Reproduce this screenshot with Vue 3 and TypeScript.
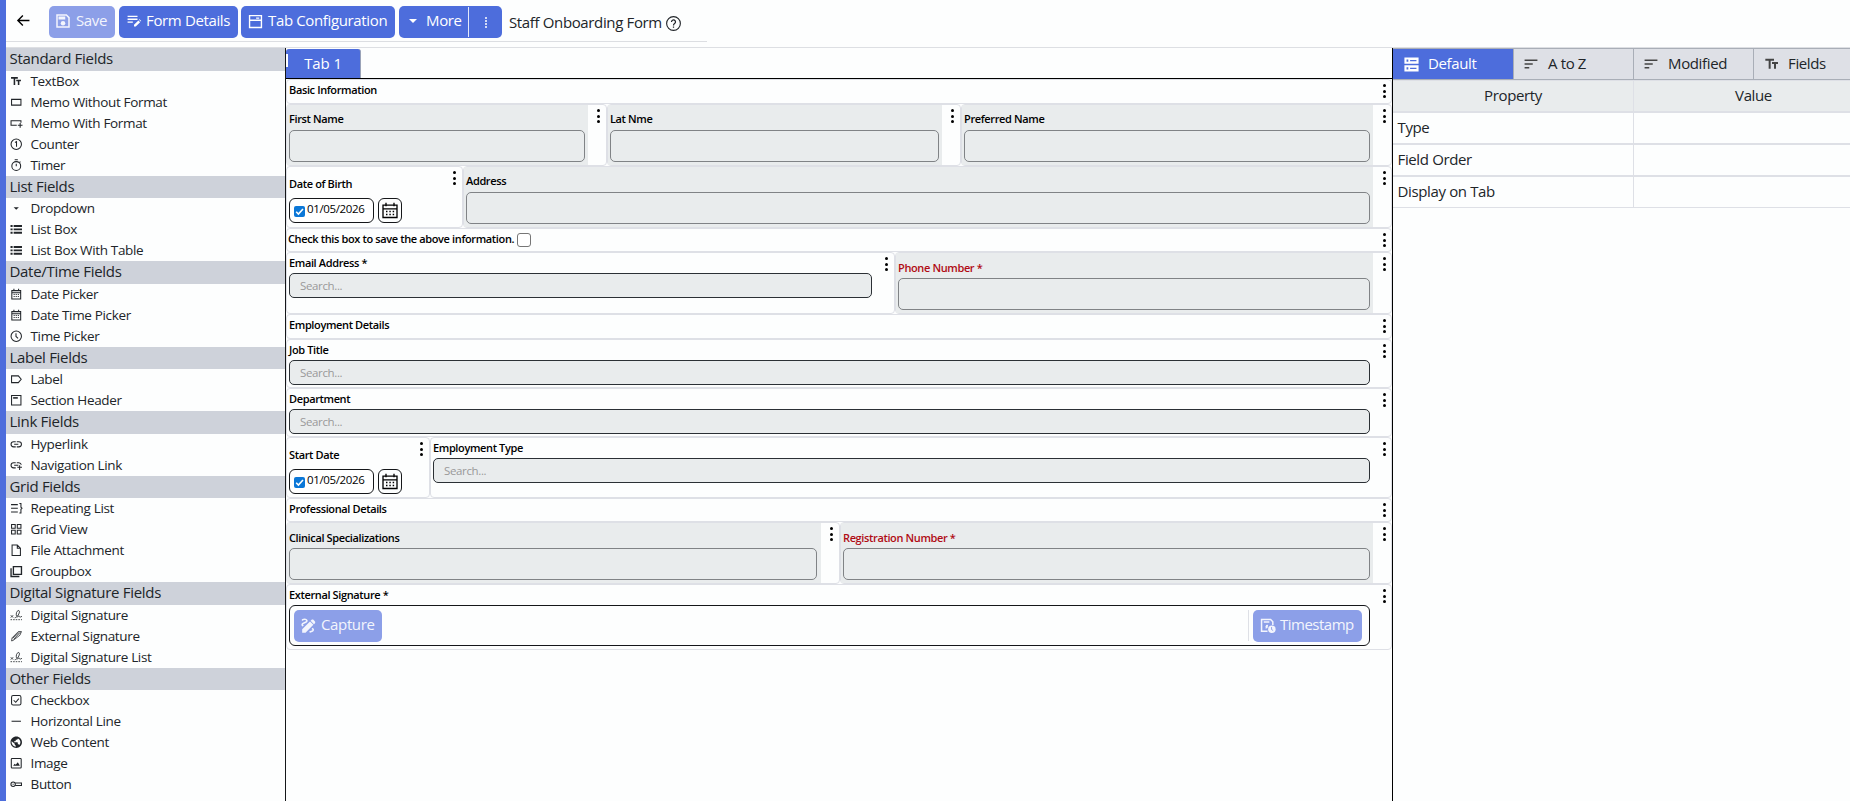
<script setup lang="ts">
interface Item { label: string; icon: string }
interface Section { title: string; items: Item[] }
interface Cell {
  kind: 'heading' | 'text' | 'search' | 'date' | 'check' | 'signature'
  label: string
  required?: boolean
}
interface Row { layout: string; cells: Cell[] }

const icons: Record<string, string> = {
  text: '<path fill="currentColor" stroke="none" d="M2 4v3h5v12h3V7h5V4H2zm19 5h-9v3h3v7h3v-7h3V9z"/>',
  memo: '<path d="M3 6.500h18v11H3z"/>',
  memoPlus: '<path d="M13 16H2V7h19v4M15 16h9M19.500 11.500v9"/>',
  counter: '<circle cx="12" cy="12" r="10"/><path d="M9.500 8.500 12.500 7v10"/>',
  timer: '<circle cx="12" cy="13.500" r="8.500"/><path d="M9 1.500h6M12 9v5M18 7l2-2"/>',
  drop: '<path fill="currentColor" stroke="none" d="m7 10 5 5 5-5z"/>',
  list: '<path fill="currentColor" stroke="none" d="M1 4h4v3.500H1zM7 4h16v3.500H7zM1 10.500h4V14H1zM7 10.500h16V14H7zM1 17h4v3.500H1zM7 17h16v3.500H7z"/>',
  calendar: '<path d="M3.500 5h17v16h-17zM3.500 9h17M7.500 1.500V5M16.500 1.500V5M7 12.500h2M11 12.500h2M15 12.500h2M7 16.500h2M11 16.500h2M15 16.500h2"/>',
  clock: '<circle cx="12" cy="12" r="10"/><path d="M11.500 6v6.500l4 3.500"/>',
  label: '<path d="M3 5.500h13l5.500 6.500-5.500 6.500H3z"/>',
  section: '<path d="M3 3h18v18H3z"/><path d="M6 7.500h9" stroke-width="3"/>',
  link: '<path d="M11 7H7a5 5 0 0 0 0 10h4M13 7h4a5 5 0 0 1 0 10h-4M8 12h8"/>',
  navLink: '<path d="M11 7H7a5 5 0 0 0 0 10h4M13 7h4a5 5 0 0 1 4.700 4M8 12h8M14 16h9M18.500 12v9"/>',
  repeat: '<path d="M2 5h13M2 12h13M2 19h13M18 3h3v7l2 2-2 2v7h-3"/>',
  grid: '<path d="M3 3h7v7H3zM14 3h7v7h-7zM3 14h7v7H3zM14 14h7v7h-7z"/>',
  file: '<path d="M4 2h10l6 6v14H4zM14 2v6h6"/>',
  group: '<path d="M6.500 3H22v15H6.500zM2 6v16h16" stroke-width="2.600"/>',
  sign: '<g stroke-width="1.600"><path d="m1.500 12 4.500 4.500M6 12l-4.500 4.500M9 17c5-1 10-9 9-13-1-3-6 0-6 6s4 6 5 3c1 2 2 4 6 1"/><path stroke-dasharray="3 2" d="M1 20.500h22"/></g>',
  pen: '<path stroke-width="1.500" d="m3 21 1-6L16 3h6l-3 7L6 20zM7 18 20 4M5 16 17 5"/>',
  check: '<rect x="3" y="3" width="18" height="18" rx="3"/><path d="m7 12 4 4 6-7"/>',
  hline: '<path d="M3 12h18"/>',
  globe: '<path fill="currentColor" stroke="none" d="M12 1C5.900 1 1 5.900 1 12s4.900 11 11 11 11-4.900 11-11S18.100 1 12 1zm-1 19.500c-4.300-.5-8-4.200-8-8.500 0-.62.08-1.210.21-1.790L9 15v1c0 1.100.9 2 2 2v2.500zm6.900-3.110c-.26-.81-1-1.390-1.900-1.390h-1v-3c0-.55-.45-1-1-1H8v-2h2c.55 0 1-.45 1-1V7h2c1.100 0 2-.9 2-2v-.41c2.930 1.190 5 4.060 5 7.410 0 2.080-.8 3.970-2.100 5.390z"/>',
  image: '<rect x="2.500" y="3" width="19" height="18" rx="1.500"/><path fill="currentColor" stroke="none" d="m6 17 3-4 2 2 4-5 4 7z"/>',
  button: '<circle cx="6" cy="12" r="4.200"/><path d="M10 9.500h12v5H10M5 12h2"/>',
  save: '<path d="M4 4h12.500L20 7.500V20H4z" stroke-width="2"/><path fill="currentColor" stroke="none" d="M6 6h9v4H6z"/><circle cx="12" cy="15" r="3" fill="currentColor" stroke="none"/>',
  form: '<path d="M1 4h17M1 9h17M1 14h9" stroke-width="2.400"/><path fill="currentColor" stroke="none" d="m12 18.500 7.500-7.500 3 3L15 21.500h-3zM20.500 10l1-1 3 3-1 1z"/>',
  tab: '<path d="M2.500 2.500h19v19h-19zM2.500 10h19M13 6.500h5" stroke-width="2.200"/>',
  dns: '<path fill="currentColor" fill-rule="evenodd" stroke="none" d="M2 2h20v9H2zM5 5h2.500v3H5zM10 5.500h9v2h-9zM2 13h20v9H2zM5 16h2.500v3H5zM10 16.500h9v2h-9z"/>',
  sort: '<path d="M1 5.500h22M1 12h14M1 18.500h8" stroke-width="2.600"/>',
  capture: '<path fill="currentColor" stroke="none" d="m18.850 10.390 1.060-1.060c.78-.78.78-2.050 0-2.830L18.500 5.090c-.78-.78-2.050-.78-2.830 0l-1.060 1.060 4.240 4.240zm-4.950-3.540L4 16.760V21h4.240l9.900-9.900-4.240-4.250zM19 17.500c0 2.190-2.540 3.500-5 3.500-.55 0-1-.45-1-1s.45-1 1-1c1.540 0 3-.73 3-1.500 0-.47-.48-.87-1.230-1.200l1.480-1.480c1.070.63 1.750 1.470 1.750 2.680zM4.580 13.350C3.610 12.790 3 12.060 3 11c0-1.800 1.890-2.630 3.560-3.360C7.590 7.180 9 6.560 9 6c0-.41-.78-1-2-1-1.260 0-1.800.61-1.830.64-.35.41-.98.46-1.400.12-.41-.34-.49-.95-.15-1.380C3.730 4.240 4.760 3 7 3s4 1.320 4 3c0 1.870-1.930 2.720-3.640 3.470C6.420 9.880 5 10.500 5 11c0 .31.43.6 1.070.86l-1.490 1.490z"/>',
  stamp: '<path d="M12 21H2.500V2.500H17L20.500 6v5M6 6.500h9" stroke-width="2.400"/><path fill="currentColor" stroke="none" d="M9 13a3 3 0 0 1 4-2l-1 5-3 1z"/><circle cx="19" cy="18" r="6" fill="currentColor" stroke="none"/><path d="M18.500 14.500v4l2.500 1.500" stroke="#8c9fe8" stroke-width="1.500"/>',
  help: '<circle cx="12" cy="12" r="11" stroke-width="1.800"/><path d="M8.800 9.500a3.200 3.200 0 1 1 5 2.600c-1.300.9-1.800 1.500-1.800 2.900M12 16.800v2" stroke-width="2"/>',
  back: '<path d="M21.500 12H3M11 4l-8 8 8 8" stroke-width="2.200"/>',
  picker: '<path d="M1.500 4h21v18.500h-21zM1.500 9.500h21M6 .5v5M18 .5v5" stroke-width="2"/><path d="M6 13.500h2.200M11 13.500h2.200M16 13.500h2.200M6 18h2.200M11 18h2.200M16 18h2.200" stroke-width="2.200"/>',
}

const sections: Section[] = [
  { title: 'Standard Fields', items: [
    { label: 'TextBox', icon: 'text' },
    { label: 'Memo Without Format', icon: 'memo' },
    { label: 'Memo With Format', icon: 'memoPlus' },
    { label: 'Counter', icon: 'counter' },
    { label: 'Timer', icon: 'timer' } ] },
  { title: 'List Fields', items: [
    { label: 'Dropdown', icon: 'drop' },
    { label: 'List Box', icon: 'list' },
    { label: 'List Box With Table', icon: 'list' } ] },
  { title: 'Date/Time Fields', items: [
    { label: 'Date Picker', icon: 'calendar' },
    { label: 'Date Time Picker', icon: 'calendar' },
    { label: 'Time Picker', icon: 'clock' } ] },
  { title: 'Label Fields', items: [
    { label: 'Label', icon: 'label' },
    { label: 'Section Header', icon: 'section' } ] },
  { title: 'Link Fields', items: [
    { label: 'Hyperlink', icon: 'link' },
    { label: 'Navigation Link', icon: 'navLink' } ] },
  { title: 'Grid Fields', items: [
    { label: 'Repeating List', icon: 'repeat' },
    { label: 'Grid View', icon: 'grid' },
    { label: 'File Attachment', icon: 'file' },
    { label: 'Groupbox', icon: 'group' } ] },
  { title: 'Digital Signature Fields', items: [
    { label: 'Digital Signature', icon: 'sign' },
    { label: 'External Signature', icon: 'pen' },
    { label: 'Digital Signature List', icon: 'sign' } ] },
  { title: 'Other Fields', items: [
    { label: 'Checkbox', icon: 'check' },
    { label: 'Horizontal Line', icon: 'hline' },
    { label: 'Web Content', icon: 'globe' },
    { label: 'Image', icon: 'image' },
    { label: 'Button', icon: 'button' } ] },
]

const rows: Row[] = [
  { layout: 'heading first', cells: [{ kind: 'heading', label: 'Basic Information' }] },
  { layout: 'names', cells: [
    { kind: 'text', label: 'First Name' },
    { kind: 'text', label: 'Lat Nme' },
    { kind: 'text', label: 'Preferred Name' } ] },
  { layout: 'birth', cells: [
    { kind: 'date', label: 'Date of Birth' },
    { kind: 'text', label: 'Address' } ] },
  { layout: 'heading', cells: [{ kind: 'check', label: 'Check this box to save the above information.' }] },
  { layout: 'contact', cells: [
    { kind: 'search', label: 'Email Address *' },
    { kind: 'text', label: 'Phone Number *', required: true } ] },
  { layout: 'heading tall', cells: [{ kind: 'heading', label: 'Employment Details' }] },
  { layout: 'single', cells: [{ kind: 'search', label: 'Job Title' }] },
  { layout: 'single', cells: [{ kind: 'search', label: 'Department' }] },
  { layout: 'start', cells: [
    { kind: 'date', label: 'Start Date' },
    { kind: 'search', label: 'Employment Type' } ] },
  { layout: 'heading', cells: [{ kind: 'heading', label: 'Professional Details' }] },
  { layout: 'clinical', cells: [
    { kind: 'text', label: 'Clinical Specializations' },
    { kind: 'text', label: 'Registration Number *', required: true } ] },
  { layout: 'signing', cells: [{ kind: 'signature', label: 'External Signature *' }] },
]

const viewTabs = [
  { label: 'Default', icon: 'dns' },
  { label: 'A to Z', icon: 'sort' },
  { label: 'Modified', icon: 'sort' },
  { label: 'Fields', icon: 'text' },
]
const properties = ['Type', 'Field Order', 'Display on Tab']
</script>

<template>
  <div class="app">
    <header class="topbar">
      <div class="actions">
        <svg class="icon back" viewBox="0 0 24 24" v-html="icons.back"></svg>
        <button class="btn save disabled"><svg class="icon" viewBox="0 0 24 24" v-html="icons.save"></svg><span>Save</span></button>
        <button class="btn details"><svg class="icon" viewBox="0 0 24 24" v-html="icons.form"></svg><span>Form Details</span></button>
        <button class="btn config"><svg class="icon" viewBox="0 0 24 24" v-html="icons.tab"></svg><span>Tab Configuration</span></button>
        <div class="btn more">
          <i class="caret"></i><span class="more-label">More</span>
          <span class="more-split"><i class="dots light"><b></b><b></b><b></b><b></b></i></span>
        </div>
        <h1>Staff Onboarding Form</h1>
        <svg class="icon help" viewBox="0 0 24 24" v-html="icons.help"></svg>
      </div>
    </header>
    <div class="body">
      <aside class="palette">
        <section v-for="s in sections" :key="s.title">
          <h2>{{ s.title }}</h2>
          <div v-for="i in s.items" :key="i.label" class="item">
            <svg class="icon" viewBox="0 0 24 24" v-html="icons[i.icon]"></svg><span>{{ i.label }}</span>
          </div>
        </section>
      </aside>
      <main class="canvas">
        <div class="tabs"><div class="tab">Tab 1</div></div>
        <div v-for="(r, n) in rows" :key="n" class="row" :class="r.layout">
          <div v-for="c in r.cells" :key="c.label" class="cell">
            <div class="field" :class="[c.kind, { required: c.required }]">
              <label>{{ c.label }}<i v-if="c.kind === 'check'" class="box"></i></label>
              <div v-if="c.kind === 'text'" class="input"></div>
              <div v-else-if="c.kind === 'search'" class="input">Search...</div>
              <div v-else-if="c.kind === 'date'" class="picker">
                <div class="date-value">
                  <svg viewBox="0 0 11 11"><path d="M2.200 5.800 4.400 8 9 3" /></svg>
                  <span>01/05/2026</span>
                </div>
                <div class="date-open"><svg class="icon" viewBox="0 0 24 24" v-html="icons.picker"></svg></div>
              </div>
              <div v-else-if="c.kind === 'signature'" class="pad">
                <button class="btn disabled capture"><svg class="icon" viewBox="0 0 24 24" v-html="icons.capture"></svg><span>Capture</span></button>
                <div class="stamp-wrap">
                  <button class="btn disabled stamp"><svg class="icon" viewBox="0 0 24 24" v-html="icons.stamp"></svg><span>Timestamp</span></button>
                </div>
              </div>
            </div>
            <i class="dots"><b></b><b></b><b></b></i>
          </div>
        </div>
      </main>
      <aside class="inspector">
        <nav>
          <div v-for="(t, n) in viewTabs" :key="t.label" class="view" :class="[t.icon, { active: n === 0 }]">
            <svg class="icon" viewBox="0 0 24 24" v-html="icons[t.icon]"></svg><span>{{ t.label }}</span>
          </div>
        </nav>
        <div class="props head"><div>Property</div><div>Value</div></div>
        <div v-for="p in properties" :key="p" class="props"><div>{{ p }}</div><div></div></div>
      </aside>
    </div>
  </div>
</template>

<style>
body { margin: 0; overflow: hidden; background: #fdfefe; }
</style>

<style scoped>
* { box-sizing: border-box; }
.app {
  width: 1850px; height: 801px; overflow: hidden; display: flex; flex-direction: column;
  border-left: 6px solid #4d6ddc; background: #fdfefe; color: #212529;
  font: 15px/22px "Open Sans", "Noto Sans", sans-serif; letter-spacing: -0.36px;
}
.icon { fill: none; stroke: currentColor; stroke-width: 2; flex: none; overflow: visible; }
.topbar { height: 48px; flex: none; border-bottom: 1px solid #dddfe3; }
.actions { display: flex; align-items: flex-start; width: 701px; height: 42px; padding: 6px 0 0 10px; border-bottom: 1px solid #dcdee2; }
.back { width: 15px; height: 15px; margin: 7px 18px 0 0; color: #000; }
.btn {
  display: flex; align-items: center; height: 32px; flex: none; padding: 0 0 2px 7px; border: 0; border-radius: 5px;
  background: #4d6ddc; color: #fff; font: inherit; letter-spacing: inherit; white-space: nowrap;
}
.btn > span:not(.more-split) { padding-bottom: 2px; }
.btn .icon { width: 14px; height: 14px; }
.btn.disabled { background: #8c9fe8; color: #f3f5fd; }
.save { width: 66px; margin-right: 4px; padding-left: 5px; }
.save .icon { width: 18px; height: 18px; }
.save span { margin-left: 4px; }
.details { width: 119px; margin-right: 3px; padding-left: 8px; }
.details span { margin-left: 5px; }
.config { width: 154px; margin-right: 4px; padding-left: 7px; }
.config .icon { width: 15px; height: 15px; }
.config span { margin-left: 5px; }
.more { width: 103px; padding: 0 0 2px 10px; }
.more-label { margin-left: 9px; width: 42px; }
.caret { border: 4px solid transparent; border-top-color: #fff; border-bottom: 0; }
.more-split { display: flex; justify-content: center; align-items: center; width: 34px; height: 30px; margin: 2px 0 0 1px; border-left: 1px solid #e4e9fa; }
h1 { margin: 5px 0 0 7px; width: 157px; font-size: 15px; font-weight: 400; line-height: 22px; white-space: nowrap; }
.help { width: 15px; height: 15px; margin-top: 10px; }
.body { display: flex; flex: 1; min-height: 0; }

.palette { width: 280px; border-right: 1px solid #15171a; }
h2 { margin: 0; height: 22.500px; padding-left: 3.500px; background: #ced2da; font-size: 15px; font-weight: 400; line-height: 20px; letter-spacing: -0.3px; }
.item { display: flex; align-items: center; height: 21px; padding-left: 4px; font-size: 13.500px; line-height: 20px; letter-spacing: -0.34px; }
.item span { height: 21px; }
.item .icon { width: 12.500px; height: 12.500px; margin-right: 8px; }

.canvas { width: 1106px; flex: none; color: #000; }
.tabs { display: flex; height: 31px; border-bottom: 1px solid #000; }
.tab { width: 75px; height: 29px; margin-top: 1px; padding-top: 3px; border-right: 1px solid #9aa3b8; border-radius: 3px 3px 0 0; background: linear-gradient(#fff, #fff) 0 5px / 2px 13px no-repeat #4d6ddc; color: #fff; text-align: center; letter-spacing: -0.1px; }
.row { display: grid; width: 1106px; height: 62px; }
.heading { height: 24px; }
.heading.first, .heading.tall { height: 25px; }
.single { height: 49px; }
.start { height: 61px; grid-template-columns: 144px 1fr; }
.names { grid-template-columns: 321px 354px 1fr; }
.birth { grid-template-columns: 177px 1fr; }
.contact { grid-template-columns: 609px 1fr; }
.clinical { grid-template-columns: 554px 1fr; }
.clinical .cell:first-child .field { padding-right: 4px; }
.signing { height: 66px; }
.cell { display: flex; min-width: 0; border: 1px solid #dee0e6; border-radius: 4px; }
.field { flex: 1; min-width: 0; padding: 0 3px 0 2px; }
label { display: block; height: 16px; font-size: 11px; font-weight: 600; line-height: 16px; letter-spacing: -0.37px; white-space: nowrap; }
.dots { display: flex; flex-direction: column; gap: 2.500px; width: 18px; flex: none; padding: 4px 0 0 9px; }
.cell:last-child > .dots { padding-left: 10px; }
.dots b { width: 3px; height: 3px; border-radius: 50%; background: #000; }
.dots.light { gap: 1px; width: 2px; padding: 0; }
.dots.light b { width: 2px; height: 2px; background: #fff; }
.field.text { background: #e9eced; padding-top: 6px; }
.field.required { padding-top: 7px; }
.clinical .field.text { padding-top: 7px; }
.required label { color: #b00b14; }
.input { height: 25px; border: 1px solid #2b3035; border-radius: 5px; background: #e9eced; color: #999; font-size: 11.500px; line-height: 24px; padding-left: 10px; }
.text .input { height: 32px; margin-top: 3px; border-color: #808386; }
.required .input { margin-top: 2px; }
.clinical .text .input { margin-top: 2px; }
.field.heading { padding-top: 2px; height: auto; }
.field.search { padding-top: 2px; }
.search .input { margin-top: 2px; }
.contact .search { padding-right: 4px; }
.field.check { padding: 1px 0 0 1px; }
.field.check label { display: flex; align-items: center; height: 18px; }
.box { width: 14px; height: 14px; margin: 2px 0 0 3px; border: 1px solid #767676; border-radius: 3px; background: #fff; }
.field.date { padding-top: 9px; }
.picker { display: flex; gap: 4px; margin-top: 6px; }
.date-value { display: flex; width: 85px; height: 25px; border: 1px solid #15171a; border-radius: 6px; background: #fff; font-size: 11.500px; letter-spacing: -0.36px; }
.date-value svg { width: 11px; height: 11px; margin: 7px 2px 0 4px; border-radius: 2px; background: #0b77d7; fill: none; stroke: #fff; stroke-width: 1.600; }
.date-value span { line-height: 19px; }
.date-open { width: 24px; height: 25px; padding: 3px; border: 1px solid #15171a; border-radius: 6px; }
.date-open .icon { display: block; width: 16px; height: 17px; }
.field.signature { padding-top: 2px; }
.pad { display: flex; justify-content: space-between; height: 41px; margin-top: 2px; padding: 4px 7px 4px 4px; border: 1px solid #15171a; border-radius: 6px; }
.capture { width: 88px; padding-left: 5px; }
.capture .icon { width: 19px; height: 19px; }
.capture span { margin-left: 3px; }
.stamp { width: 109px; }
.stamp .icon { width: 15px; height: 15px; }
.stamp span { margin-left: 5px; letter-spacing: -0.5px; }
.stamp-wrap { padding-left: 4px; border-left: 1px solid #dee0e6; }

.inspector { width: 458px; overflow: hidden; border-left: 1px solid #000; }
nav { display: flex; width: 482px; height: 32px; border: 1px solid #a9aeb7; border-left: 0; }
.view { display: flex; align-items: center; width: 120px; flex: none; padding-left: 10px; border-right: 1px solid #a9aeb7; background: #dee0e6; }
.view span { padding-bottom: 2px; }
.view .icon { width: 14px; height: 14px; margin-right: 10px; color: #444; }
.view.dns .icon { width: 17px; height: 17px; margin: 0 8px 0 -1px; }
.view.text .icon { width: 16px; height: 16px; margin-right: 8px; }
.view.active { width: 121px; padding-left: 11px; background: #4d6ddc; color: #fff; }
.view.active .icon { color: #fff; }
.props { display: grid; grid-template-columns: 241px 240px; width: 481px; height: 32px; }
.props div { border: 1px solid #dee0e6; border-left-width: 0; padding: 3px 0 0 4.500px; }
.head div { background: #e9eced; text-align: center; padding-left: 0; }
</style>
